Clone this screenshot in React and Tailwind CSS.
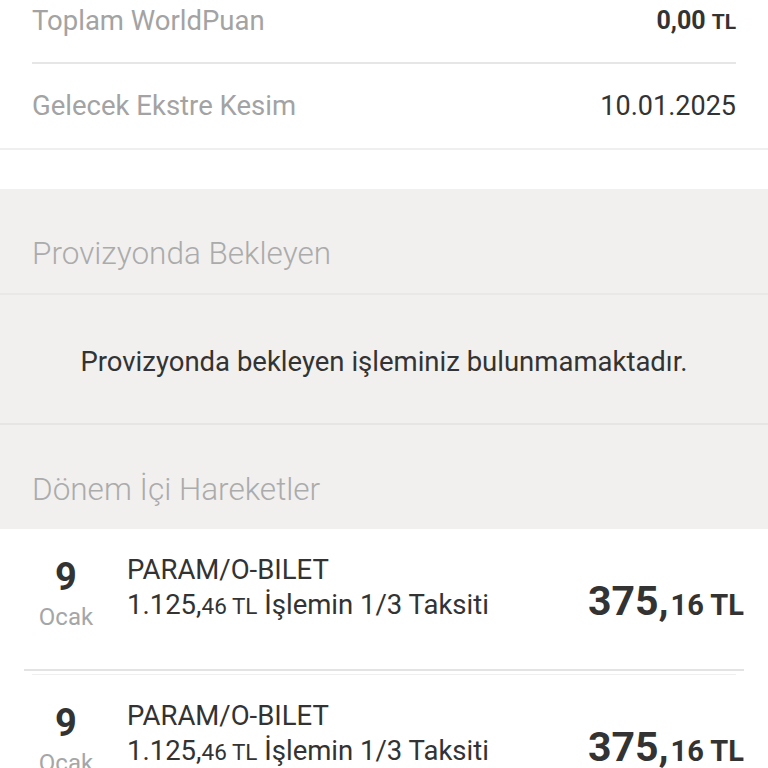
import React from 'react';

const font = { fontFamily: 'Roboto, "Noto Sans", sans-serif' };

const InfoRow = ({ label, children, border = true }) => (
    <div className={`flex h-[84px] items-center justify-between ${border ? 'border-b-2 border-[#e6e6e6]' : ''}`}>
        <span className="text-[27.5px] text-[#a3a3a3]">{label}</span>
        {children}
    </div>
);

const SectionHeader = ({ title }) => (
    <div className="px-8 pt-[45px] pb-[19px] border-b-2 border-[#e9e8e7]">
        <h3 className="text-[31.5px] leading-[40px] font-light text-[#ababab]">{title}</h3>
    </div>
);

const Transaction = ({ day, month, title, total, totalDec, amount, amountDec }) => (
    <div>
        <div className="mx-6 flex h-[142px] border-b-2 border-[#e3e3e3]">
            <div className="w-[84px] flex flex-col items-center pt-[29px]">
                <span className="text-[38px] leading-none font-bold text-[#333333]">{day}</span>
                <span className="mt-[9px] text-[24px] leading-none text-[#a6a6a6]">{month}</span>
            </div>
            <div className="flex-1 pl-[19px] pt-[26px]">
                <div className="text-[27.5px] leading-[30px] text-[#333333]">{title}</div>
                <div className="mt-[5px] text-[27.5px] leading-[30px] text-[#333333]">
                    {total}<span className="text-[22.5px]">{totalDec} TL</span> İşlemin 1/3 Taksiti
                </div>
            </div>
            <div className="flex items-center pt-[5px]">
                <span className="flex items-baseline font-bold text-[#333333]">
                    <span className="text-[41px]">{amount},</span>
                    <span className="text-[29px] ml-[2px]">{amountDec} TL</span>
                </span>
            </div>
        </div>
        <div className="mx-8 mt-[3px] h-px bg-[#efefef]" />
    </div>
);

export default function App() {
    return (
        <div className="h-[768px] w-[768px] overflow-hidden bg-white" style={font}>
            <div className="-mt-[20px]">
                <div className="border-b-2 border-[#efefef]">
                    <div className="px-8">
                        <InfoRow label="Toplam WorldPuan">
                            <span className="font-bold text-[#333333]">
                                <span className="text-[25px]">0,00</span>
                                <span className="text-[21px] ml-[6px]">TL</span>
                            </span>
                        </InfoRow>
                        <InfoRow label="Gelecek Ekstre Kesim" border={false}>
                            <span className="text-[27px] text-[#333333]">10.01.2025</span>
                        </InfoRow>
                    </div>
                </div>
                <div className="h-[39px]" />
                <div className="bg-[#f1f0ef]">
                    <SectionHeader title="Provizyonda Bekleyen" />
                    <div className="h-[130px] flex items-center justify-center border-b-2 border-[#e6e5e4] pt-[5px]">
                        <p className="text-[27.5px] text-[#333333]">Provizyonda bekleyen işleminiz bulunmamaktadır.</p>
                    </div>
                    <div className="px-8 pt-[45px] pb-[19px]">
                        <h3 className="text-[31.5px] leading-[40px] font-light text-[#ababab]">Dönem İçi Hareketler</h3>
                    </div>
                </div>
                <Transaction day="9" month="Ocak" title="PARAM/O-BILET" total="1.125," totalDec="46" amount="375" amountDec="16" />
                <Transaction day="9" month="Ocak" title="PARAM/O-BILET" total="1.125," totalDec="46" amount="375" amountDec="16" />
            </div>
        </div>
    );
}
